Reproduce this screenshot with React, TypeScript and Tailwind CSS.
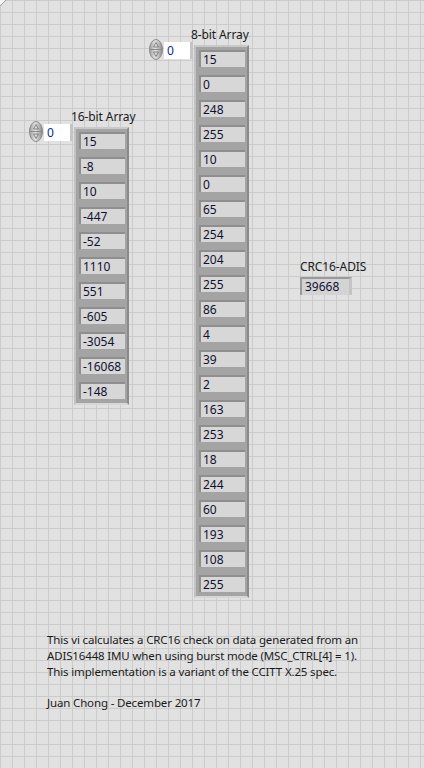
const bytes = [15, 0, 248, 255, 10, 0, 65, 254, 204, 255, 86, 4, 39, 2, 163, 253, 18, 244, 60, 193, 108, 255];
const words = [15, -8, 10, -447, -52, 1110, 551, -605, -3054, -16068, -148];

function Spinner() {
  return (
    <svg width="14" height="21" viewBox="0 0 14 21">
      <defs>
        <linearGradient id="sp" x1="0" y1="0" x2="1" y2="0">
          <stop offset="0" stopColor="#9c9c9c" />
          <stop offset="0.45" stopColor="#e4e4e4" />
          <stop offset="1" stopColor="#8a8a8a" />
        </linearGradient>
      </defs>
      <ellipse cx="7" cy="10.5" rx="6.5" ry="10" fill="url(#sp)" stroke="#8a8a8a" strokeWidth="1" />
      <line x1="1" y1="10.5" x2="13" y2="10.5" stroke="#8a8a8a" strokeWidth="1" />
      <path d="M7 3.5 L9.5 8 L4.5 8 Z" fill="none" stroke="#7a7a7a" strokeWidth="0.9" />
      <path d="M7 17.5 L9.5 13 L4.5 13 Z" fill="none" stroke="#7a7a7a" strokeWidth="0.9" />
    </svg>
  );
}

function IndexControl({ left, top }: { left: number; top: number }) {
  return (
    <div className="absolute flex items-start" style={{ left, top }}>
      <Spinner />
      <div className="ml-[1px] mt-[3px] h-[17px] w-[29px] bg-white border-r-[3px] border-[#c4c4c4] pl-[3px] text-[12px] leading-[17px] text-[#0a2a9a]">
        0
      </div>
    </div>
  );
}

function ArrayFrame({ left, top, label, values }: { left: number; top: number; label: string; values: number[] }) {
  return (
    <>
      <div
        className="absolute text-[12px] leading-[16px] text-[#1a1a1a] whitespace-nowrap tracking-[-0.1px]"
        style={{ left: left - 3, top: top - 18 }}
      >
        {label}
      </div>
      <div
        className="absolute w-[55px] bg-[#a4a4a4] border-2 border-t-[#c9c9c9] border-l-[#c2c2c2] border-b-[#d6d6d6] border-r-[#8a8a8a] pl-[3px] pr-[2px] pt-[3px] pb-[4px] flex flex-col gap-[8px]"
        style={{ left, top }}
      >
        {values.map((v, i) => (
          <div
            key={i}
            className="h-[17px] w-[46px] bg-[#d7d7d7] border-t-2 border-l-2 border-[#8e8e8e] pl-[2px] text-[12px] leading-[15px] text-[#101030]"
          >
            {v}
          </div>
        ))}
      </div>
    </>
  );
}

export default function App() {
  return (
    <div
      className="relative w-[424px] h-[768px] overflow-hidden bg-[#e1e1e1] bg-[linear-gradient(to_right,#cbcbcb_1px,transparent_1px),linear-gradient(to_bottom,#cbcbcb_1px,transparent_1px)] bg-[size:12px_12px]"
      style={{ fontFamily: '"Noto Sans", "Open Sans", sans-serif' }}
    >
      <svg className="absolute left-0 top-0" width="8" height="8" viewBox="0 0 8 8">
        <path d="M0 0 L6 0 L0 6 Z" fill="#f4f4f4" />
        <path d="M0 6 L6 0" stroke="#9a9a9a" strokeWidth="1" />
      </svg>

      <IndexControl left={149} top={39} />
      <ArrayFrame left={194} top={45} label="8-bit Array" values={bytes} />

      <IndexControl left={29} top={121} />
      <ArrayFrame left={74} top={127} label="16-bit Array" values={words} />

      <div className="absolute left-[300px] top-[259px]">
        <div className="text-[12px] leading-[16px] text-[#1a1a1a] tracking-[-0.1px]">CRC16-ADIS</div>
        <div className="mt-[2px] h-[18px] w-[52px] bg-[#d3d3d3] border-t-2 border-l-2 border-[#9a9a9a] border-r-[3px] border-r-[#c4c4c4] pl-[3px] text-[12px] leading-[15px] text-[#101030]">
          39668
        </div>
      </div>

      <div className="absolute left-[47px] top-[632px] text-[11.5px] leading-[16px] tracking-[-0.15px] text-[#1a1a1a]">
        <p>This vi calculates a CRC16 check on data generated from an</p>
        <p>ADIS16448 IMU when using burst mode (MSC_CTRL[4] = 1).</p>
        <p>This implementation is a variant of the CCITT X.25 spec.</p>
        <p className="mt-[15px]">Juan Chong - December 2017</p>
      </div>
    </div>
  );
}
